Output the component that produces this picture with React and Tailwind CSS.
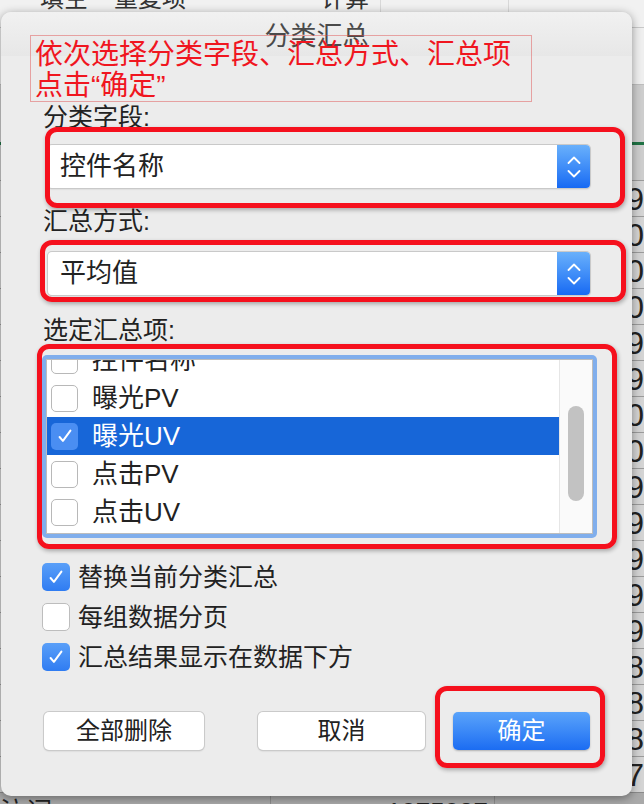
import React from "react";

const FONT = {
  fontFamily: '"Liberation Sans", "Noto Sans CJK SC", sans-serif',
};

const digits = ["9", "0", "0", "0", "9", "9", "0", "0", "9", "9", "9", "9", "9", "8", "8", "8", "7"];

const Check = ({ className = "w-[20px] h-[20px]" }) => (
  <svg viewBox="0 0 24 24" className={className} fill="none">
    <path
      d="M5.5 13.2l4 4.6L18.5 5.5"
      stroke="white"
      strokeWidth="2.4"
      strokeLinecap="round"
      strokeLinejoin="round"
    />
  </svg>
);

const Stepper = () => (
  <div className="w-[33px] h-full rounded-r-[4px] bg-gradient-to-b from-[#69b0fb] to-[#1669f3] flex flex-col items-center justify-center gap-[6px]">
    <svg viewBox="0 0 14 8" className="w-[14px] h-[8px]" fill="none">
      <path d="M1.5 7L7 1.5 12.5 7" stroke="white" strokeWidth="1.8" strokeLinecap="round" strokeLinejoin="round" />
    </svg>
    <svg viewBox="0 0 14 8" className="w-[14px] h-[8px]" fill="none">
      <path d="M1.5 1L7 6.5 12.5 1" stroke="white" strokeWidth="1.8" strokeLinecap="round" strokeLinejoin="round" />
    </svg>
  </div>
);

const Select = ({ value }) => (
  <div className="ml-[47px] w-[542px] h-[43px] flex bg-white rounded-[4px] shadow-[0_0_0_1px_#c9c9c9,0_1px_2px_rgba(0,0,0,0.2)]">
    <div className="flex-1 flex items-center pl-[12px] text-[26px] text-[#222]">{value}</div>
    <Stepper />
  </div>
);

const ListRow = ({ label, selected }) => (
  <div
    className={
      "h-[38px] flex items-center pl-[4px] " +
      (selected ? "bg-[#1766d8] text-white" : "text-[#222]")
    }
  >
    <div
      className={
        "w-[27px] h-[27px] rounded-[5px] flex items-center justify-center " +
        (selected ? "bg-[#4a8ef2]" : "bg-white border border-[#b8b8b8]")
      }
    >
      {selected && <Check />}
    </div>
    <span className="ml-[14px] text-[26px] leading-[30px]">{label}</span>
  </div>
);

const CheckRow = ({ label, checked }) => (
  <div className="h-[30px] flex items-center">
    <div
      className={
        "w-[28px] h-[28px] rounded-[5px] flex items-center justify-center " +
        (checked
          ? "bg-gradient-to-b from-[#5a9ff8] to-[#2f7cf2]"
          : "bg-white border border-[#bdbdbd]")
      }
    >
      {checked && <Check />}
    </div>
    <span className="ml-[8px] text-[25px] leading-[30px] text-[#222]">{label}</span>
  </div>
);

const Button = ({ children, primary, width }) => (
  <div
    className={
      "h-[38px] rounded-[5px] flex items-center justify-center text-[24px] " +
      width +
      " " +
      (primary
        ? "bg-gradient-to-b from-[#5aa3fa] to-[#1b6cf2] text-white shadow-[0_1px_2px_rgba(0,0,0,0.25)]"
        : "bg-white text-[#222] shadow-[0_0_0_1px_#cacaca,0_1px_2px_rgba(0,0,0,0.2)]")
    }
  >
    {children}
  </div>
);

export default function App() {
  return (
    <div className="relative w-[644px] h-[804px] overflow-hidden bg-[#d2d2d2]" style={FONT}>
      {/* spreadsheet behind the dialog */}
      <div className="flex flex-col">
        <div className="h-[28px] flex bg-[#f1f1f1] border-b border-[#c8c8c8] text-[24px] text-[#333] overflow-hidden">
          <div className="w-[381px] flex border-r border-[#d8d8d8]">
            <span className="ml-[40px] -mt-[16px] leading-[30px]">填空</span>
            <span className="ml-[26px] -mt-[16px] leading-[30px]">重复项</span>
            <span className="ml-[135px] -mt-[16px] leading-[30px]">计算</span>
          </div>
          <div className="w-[128px] border-r border-[#d8d8d8]" />
          <div className="flex-1" />
        </div>
        <div className="h-[57px] bg-[#efefef] border-b border-[#bdbdbd]" />
        <div className="h-[95px] bg-[#cdcdcd] flex flex-col">
          <div className="h-[57px]" />
          <div className="h-[3px] bg-[#1f7244]" />
        </div>
        {digits.map((d, i) => (
          <div key={i} className="h-[36px] flex border-t border-[#9b9b9b] bg-[#d4d4d4]">
            <div className="w-[634px]" />
            <span className="text-[32px] leading-[36px] text-[#222]">{d}</span>
          </div>
        ))}
        <div className="h-[40px] flex bg-[#a9a9a9] border-t border-[#8a8a8a] text-[26px] text-[#222] overflow-hidden">
          <div className="w-[271px] border-r border-[#8c8c8c] pt-[4px] leading-[30px]">泣词</div>
          <div className="w-[224px] border-r border-[#8c8c8c] pt-[4px] pr-[6px] text-right leading-[30px]">1075087</div>
          <div className="flex-1" />
        </div>
      </div>

      {/* dialog */}
      <div className="absolute left-[1px] top-[12px] w-[631px] h-[784px] rounded-[10px] bg-[#ececec] shadow-[0_2px_10px_rgba(0,0,0,0.4)] flex flex-col">
        <div className="h-[44px] rounded-t-[10px] bg-gradient-to-b from-[#f1f1f1] to-[#e7e7e7] flex items-center justify-center pt-[4px] text-[26px] leading-[30px] text-[#4a4a4a]">
          分类汇总
        </div>

        <div className="mt-[46px] pl-[42px] text-[25px] leading-[30px] text-[#222]">分类字段:</div>
        <div className="mt-[13px]">
          <Select value="控件名称" />
        </div>

        <div className="mt-[18px] pl-[42px] text-[25px] leading-[30px] text-[#222]">汇总方式:</div>
        <div className="mt-[16px]">
          <Select value="平均值" />
        </div>

        <div className="mt-[20px] pl-[42px] text-[25px] leading-[30px] text-[#222]">选定汇总项:</div>

        <div className="mt-[10px] ml-[41px] w-[555px] h-[183px] rounded-[5px] bg-[#80aeec] p-[4px]">
          <div className="h-full flex bg-white border border-[#bdbdbd] overflow-hidden">
            <div className="flex-1 overflow-hidden">
              <div className="-mt-[19px]">
                <ListRow label="控件名称" />
                <ListRow label="曝光PV" />
                <ListRow label="曝光UV" selected />
                <ListRow label="点击PV" />
                <ListRow label="点击UV" />
              </div>
            </div>
            <div className="w-[33px] border-l border-[#e6e6e6] bg-[#fafafa] pt-[46px] flex justify-center">
              <div className="w-[16px] h-[95px] rounded-full bg-[#c2c2c2]" />
            </div>
          </div>
        </div>

        <div className="mt-[24px] ml-[41px] flex flex-col gap-[10px]">
          <CheckRow label="替换当前分类汇总" checked />
          <CheckRow label="每组数据分页" />
          <CheckRow label="汇总结果显示在数据下方" checked />
        </div>

        <div className="mt-[40px] ml-[43px] flex">
          <Button width="w-[160px]">全部删除</Button>
          <div className="ml-[54px]">
            <Button width="w-[167px]">取消</Button>
          </div>
          <div className="ml-[28px]">
            <Button width="w-[137px]" primary>
              确定
            </Button>
          </div>
        </div>
      </div>

      {/* annotation overlays */}
      <div className="absolute left-[30px] top-[35px] w-[502px] h-[67px] border border-[rgba(225,70,70,0.45)] pl-[4px] pt-[3px] text-[28px] leading-[31px] text-[#f0161f]">
        依次选择分类字段、汇总方式、汇总项
        <br />
        点击“确定”
      </div>
      <div className="absolute left-[45px] top-[127px] w-[580px] h-[81px] rounded-[12px] border-[5px] border-[#f5101d] shadow-[1px_2px_4px_rgba(0,0,0,0.3)]" />
      <div className="absolute left-[40px] top-[240px] w-[586px] h-[62px] rounded-[12px] border-[5px] border-[#f5101d] shadow-[1px_2px_4px_rgba(0,0,0,0.3)]" />
      <div className="absolute left-[37px] top-[344px] w-[580px] h-[205px] rounded-[12px] border-[5px] border-[#f5101d] shadow-[1px_2px_4px_rgba(0,0,0,0.3)]" />
      <div className="absolute left-[435px] top-[686px] w-[170px] h-[82px] rounded-[12px] border-[5px] border-[#f5101d] shadow-[1px_2px_4px_rgba(0,0,0,0.3)]" />
    </div>
  );
}
